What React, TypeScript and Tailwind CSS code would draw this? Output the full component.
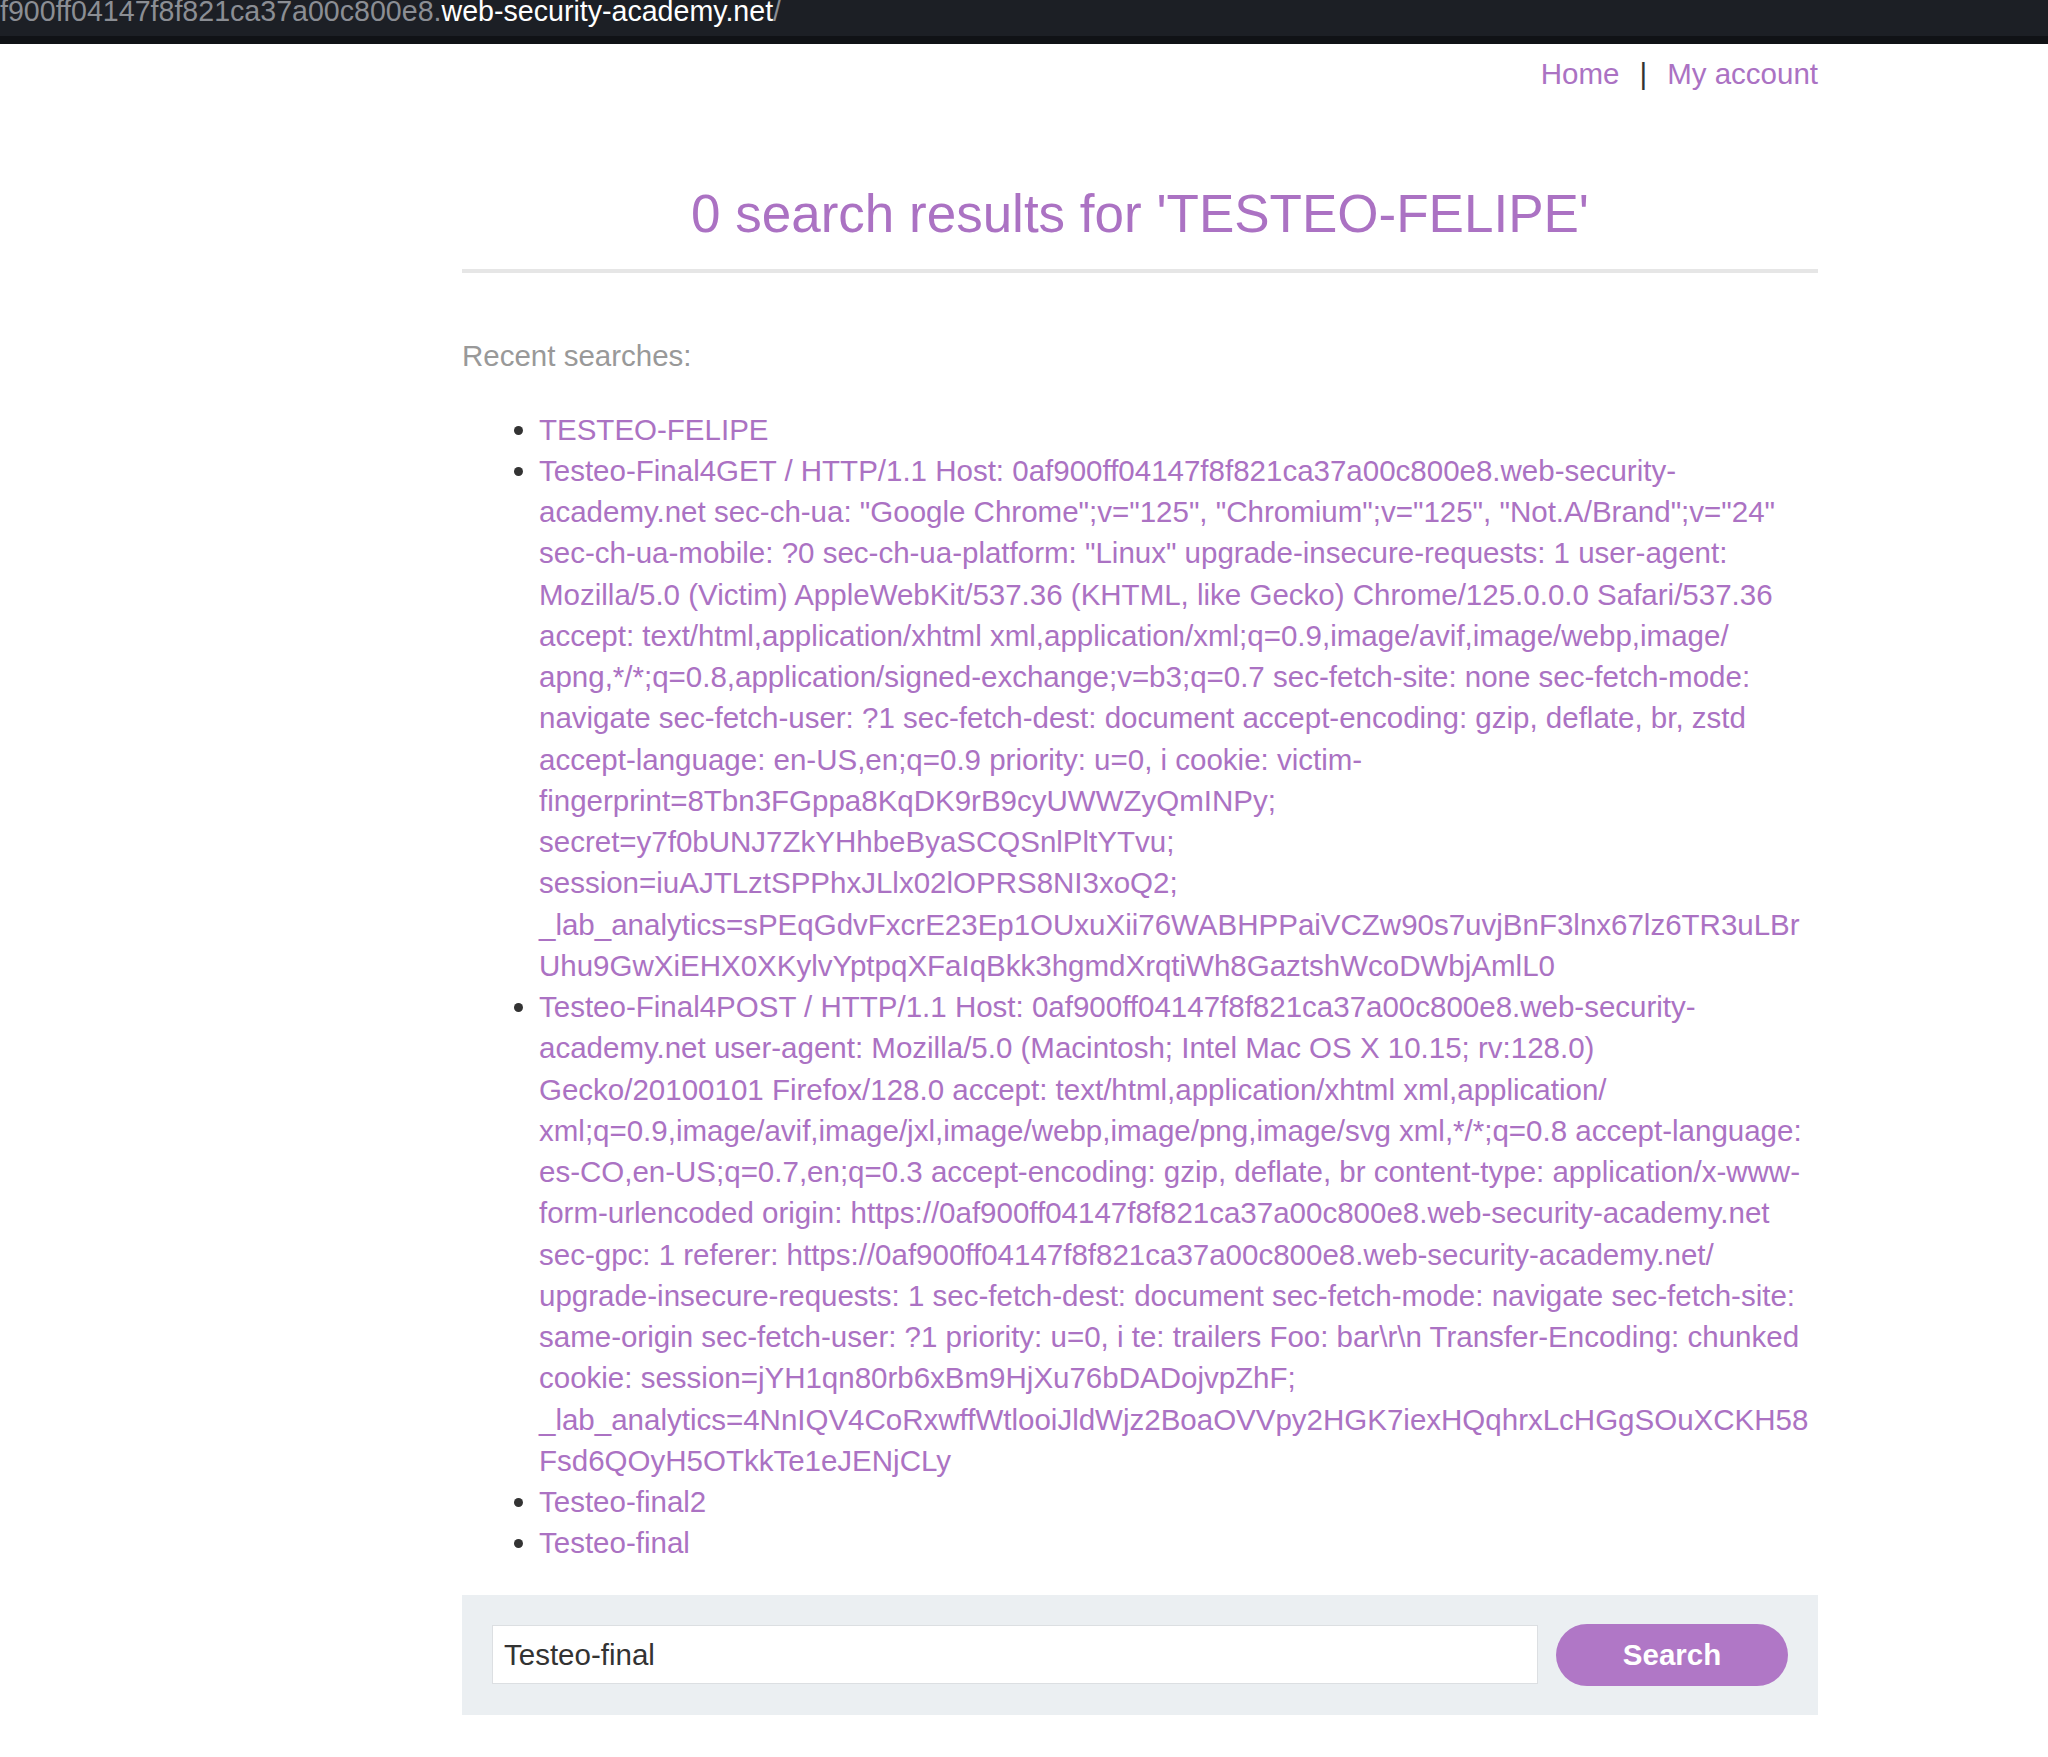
// each recent search is kept as the lines it wraps into on the page
const recentSearches: string[][] = [
  ["TESTEO-FELIPE"],
  [
    "Testeo-Final4GET / HTTP/1.1 Host: 0af900ff04147f8f821ca37a00c800e8.web-security-",
    'academy.net sec-ch-ua: "Google Chrome";v="125", "Chromium";v="125", "Not.A/Brand";v="24"',
    'sec-ch-ua-mobile: ?0 sec-ch-ua-platform: "Linux" upgrade-insecure-requests: 1 user-agent:',
    "Mozilla/5.0 (Victim) AppleWebKit/537.36 (KHTML, like Gecko) Chrome/125.0.0.0 Safari/537.36",
    "accept: text/html,application/xhtml xml,application/xml;q=0.9,image/avif,image/webp,image/",
    "apng,*/*;q=0.8,application/signed-exchange;v=b3;q=0.7 sec-fetch-site: none sec-fetch-mode:",
    "navigate sec-fetch-user: ?1 sec-fetch-dest: document accept-encoding: gzip, deflate, br, zstd",
    "accept-language: en-US,en;q=0.9 priority: u=0, i cookie: victim-",
    "fingerprint=8Tbn3FGppa8KqDK9rB9cyUWWZyQmINPy;",
    "secret=y7f0bUNJ7ZkYHhbeByaSCQSnlPltYTvu;",
    "session=iuAJTLztSPPhxJLlx02lOPRS8NI3xoQ2;",
    "_lab_analytics=sPEqGdvFxcrE23Ep1OUxuXii76WABHPPaiVCZw90s7uvjBnF3lnx67lz6TR3uLBr",
    "Uhu9GwXiEHX0XKylvYptpqXFaIqBkk3hgmdXrqtiWh8GaztshWcoDWbjAmlL0",
  ],
  [
    "Testeo-Final4POST / HTTP/1.1 Host: 0af900ff04147f8f821ca37a00c800e8.web-security-",
    "academy.net user-agent: Mozilla/5.0 (Macintosh; Intel Mac OS X 10.15; rv:128.0)",
    "Gecko/20100101 Firefox/128.0 accept: text/html,application/xhtml xml,application/",
    "xml;q=0.9,image/avif,image/jxl,image/webp,image/png,image/svg xml,*/*;q=0.8 accept-language:",
    "es-CO,en-US;q=0.7,en;q=0.3 accept-encoding: gzip, deflate, br content-type: application/x-www-",
    "form-urlencoded origin: https://0af900ff04147f8f821ca37a00c800e8.web-security-academy.net",
    "sec-gpc: 1 referer: https://0af900ff04147f8f821ca37a00c800e8.web-security-academy.net/",
    "upgrade-insecure-requests: 1 sec-fetch-dest: document sec-fetch-mode: navigate sec-fetch-site:",
    "same-origin sec-fetch-user: ?1 priority: u=0, i te: trailers Foo: bar\\r\\n Transfer-Encoding: chunked",
    "cookie: session=jYH1qn80rb6xBm9HjXu76bDADojvpZhF;",
    "_lab_analytics=4NnIQV4CoRxwffWtlooiJldWjz2BoaOVVpy2HGK7iexHQqhrxLcHGgSOuXCKH58",
    "Fsd6QOyH5OTkkTe1eJENjCLy",
  ],
  ["Testeo-final2"],
  ["Testeo-final"],
];

export default function App() {
  return (
    <div className="min-h-[1757px] bg-white font-['Liberation_Sans',Arial,sans-serif]">
      {/* Browser address bar */}
      <div className="h-[44px] bg-[#1c1f25] flex flex-col overflow-hidden">
        <div className="h-[36px] relative">
          <div className="absolute left-0 top-[-3px] text-[28.6px] leading-none whitespace-nowrap">
            <span className="text-[#8b8e94]">f900ff04147f8f821ca37a00c800e8.</span>
            <span className="text-white">web-security-academy.net</span>
            <span className="text-[#8b8e94]">/</span>
          </div>
        </div>
        <div className="flex-1 bg-[#101216]" />
      </div>

      <div className="ml-[462px] w-[1356px] text-[29.5px] leading-[41.25px]">
        {/* Nav */}
        <div className="pt-[9px] flex justify-end items-center gap-[20px]">
          <a className="text-[#ab72c3]">Home</a>
          <span className="text-[#333]">|</span>
          <a className="text-[#ab72c3]">My account</a>
        </div>

        {/* Heading */}
        <h1 className="mt-[88px] text-center text-[53px] leading-[64px] text-[#ab72c3]">
          0 search results for 'TESTEO-FELIPE'
        </h1>
        <div className="mt-[23px] h-[4px] bg-[#e6e6e6]" />

        <p className="mt-[62px] text-[#999]">Recent searches:</p>

        <ul className="mt-[32px] pl-[77px] list-disc marker:text-[#333]">
          {recentSearches.map((lines, i) => (
            <li key={i} className="text-[#ab72c3]">
              <a>
                {lines.map((line, j) => (
                  <span key={j} className={j === 0 ? "whitespace-nowrap" : "block whitespace-nowrap"}>
                    {line}
                  </span>
                ))}
              </a>
            </li>
          ))}
        </ul>

        {/* Search form */}
        <div className="mt-[31px] h-[120px] bg-[#ebeff2] px-[30px] flex items-center gap-[18px]">
          <div className="flex-1 h-[59px] bg-white border border-[#dcdfe2] flex items-center px-[11px] text-[#333]">
            Testeo-final
          </div>
          <button className="w-[232px] h-[62px] rounded-full bg-[#b077c6] text-white font-bold">
            Search
          </button>
        </div>
      </div>
    </div>
  );
}
